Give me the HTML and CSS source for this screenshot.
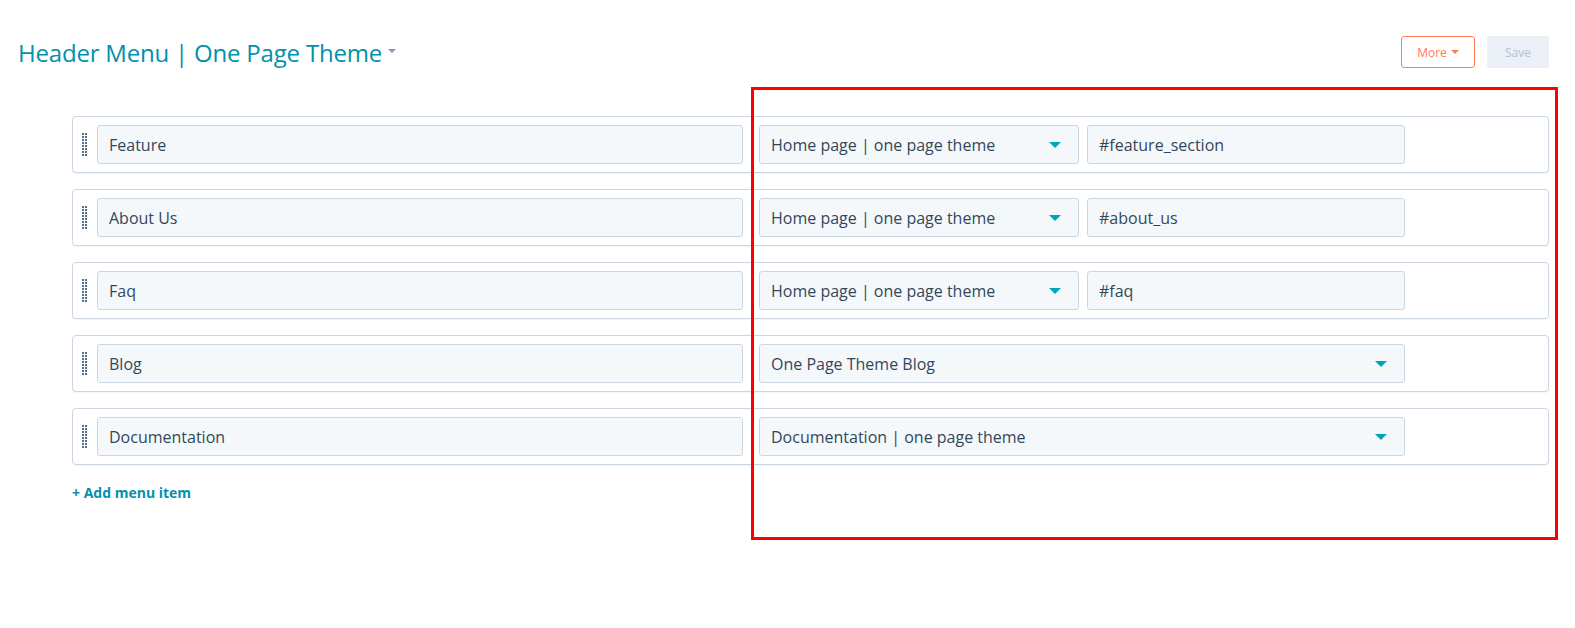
FILE: index.html
```html
<!DOCTYPE html>
<html lang="en">
<head>
<meta charset="utf-8">
<title>Header Menu | One Page Theme</title>
<link rel="stylesheet" href="styles.css">
</head>
<body>
<div class="page">
  <header class="topbar">
    <h1 class="title">Header Menu | One Page Theme <span class="title-caret"></span></h1>
    <div class="actions">
      <button class="btn btn-more">More <span class="caret"></span></button>
      <button class="btn btn-save">Save</button>
    </div>
  </header>

  <div class="menu">
    <div class="item">
      <svg class="handle" width="5" height="23" viewBox="0 0 5 23"><defs><pattern id="dots" width="3" height="3" patternUnits="userSpaceOnUse"><rect width="2" height="2" fill="#516f90"/></pattern></defs><rect width="5" height="23" fill="url(#dots)"/></svg>
      <div class="field name">Feature</div>
      <div class="target">
        <div class="field select">Home page | one page theme<span class="arrow"></span></div>
        <div class="field hash">#feature_section</div>
      </div>
    </div>
    <div class="item">
      <svg class="handle" width="5" height="23" viewBox="0 0 5 23"><rect width="5" height="23" fill="url(#dots)"/></svg>
      <div class="field name">About Us</div>
      <div class="target">
        <div class="field select">Home page | one page theme<span class="arrow"></span></div>
        <div class="field hash">#about_us</div>
      </div>
    </div>
    <div class="item">
      <svg class="handle" width="5" height="23" viewBox="0 0 5 23"><rect width="5" height="23" fill="url(#dots)"/></svg>
      <div class="field name">Faq</div>
      <div class="target">
        <div class="field select">Home page | one page theme<span class="arrow"></span></div>
        <div class="field hash">#faq</div>
      </div>
    </div>
    <div class="item">
      <svg class="handle" width="5" height="23" viewBox="0 0 5 23"><rect width="5" height="23" fill="url(#dots)"/></svg>
      <div class="field name">Blog</div>
      <div class="target">
        <div class="field select wide">One Page Theme Blog<span class="arrow"></span></div>
      </div>
    </div>
    <div class="item">
      <svg class="handle" width="5" height="23" viewBox="0 0 5 23"><rect width="5" height="23" fill="url(#dots)"/></svg>
      <div class="field name">Documentation</div>
      <div class="target">
        <div class="field select wide">Documentation | one page theme<span class="arrow"></span></div>
      </div>
    </div>
    <a class="add-link" href="#">+ Add menu item</a>
  </div>
</div>
<div class="highlight"></div>
</body>
</html>
```

FILE: styles.css
```css
* { box-sizing: border-box; }

body {
  margin: 0;
  background: #ffffff;
  font-family: "Open Sans", "Noto Sans", "Liberation Sans", sans-serif;
  color: #33475b;
}

.page {
  padding: 36px 26px 0 18px;
}

.topbar {
  display: flex;
  justify-content: space-between;
  align-items: center;
  height: 32px;
}

.title {
  margin: 0;
  font-size: 24px;
  font-weight: 400;
  color: #0091ae;
  letter-spacing: -0.2px;
  display: flex;
  align-items: center;
  gap: 6px;
  white-space: nowrap;
}

.title-caret {
  width: 0;
  height: 0;
  border-left: 4px solid transparent;
  border-right: 4px solid transparent;
  border-top: 4px solid #7c98b6;
  margin-top: -2px;
}

.actions {
  display: flex;
  gap: 12px;
}

.btn {
  height: 32px;
  border-radius: 3px;
  font-family: inherit;
  font-size: 12px;
  display: flex;
  align-items: center;
  justify-content: center;
  gap: 4px;
}

.btn-more {
  width: 74px;
  background: #ffffff;
  border: 1px solid #ff7a59;
  color: #ff7a59;
}

.caret {
  width: 0;
  height: 0;
  border-left: 4px solid transparent;
  border-right: 4px solid transparent;
  border-top: 4px solid #ff7a59;
}

.btn-save {
  width: 62px;
  background: #eaf0f6;
  border: 1px solid #eaf0f6;
  color: #b0c1d4;
}

.menu {
  margin: 48px 0 0 54px;
  display: flex;
  flex-direction: column;
  gap: 16px;
}

.item {
  display: flex;
  align-items: center;
  height: 57px;
  padding: 8px 8px 8px 9px;
  border: 1px solid #cbd6e2;
  border-radius: 4px;
  background: #ffffff;
  box-shadow: 0 1px 2px rgba(45, 62, 80, 0.06);
}

.handle {
  display: block;
  width: 5px;
  height: 23px;
  margin-right: 10px;
  flex: none;
}

.field {
  height: 39px;
  background: #f5f8fa;
  border: 1px solid #cbd6e2;
  border-radius: 3px;
  padding: 0 11px;
  display: flex;
  align-items: center;
  font-size: 16px;
  color: #33475b;
  white-space: nowrap;
  flex: none;
}

.name {
  width: 646px;
}

.target {
  display: flex;
  gap: 8px;
  margin-left: 16px;
  width: 646px;
}

.select {
  width: 320px;
  justify-content: space-between;
  padding-right: 17px;
}

.select.wide {
  width: 646px;
}

.hash {
  width: 318px;
}

.arrow {
  width: 0;
  height: 0;
  border-left: 6px solid transparent;
  border-right: 6px solid transparent;
  border-top: 6px solid #00a4bd;
}

.add-link {
  margin-top: 2px;
  align-self: flex-start;
  font-size: 14px;
  font-weight: 700;
  color: #0091ae;
  text-decoration: none;
  line-height: 20px;
}

.highlight {
  position: absolute;
  left: 751px;
  top: 87px;
  width: 807px;
  height: 453px;
  border: 3px solid #ff0000;
  pointer-events: none;
}
```
